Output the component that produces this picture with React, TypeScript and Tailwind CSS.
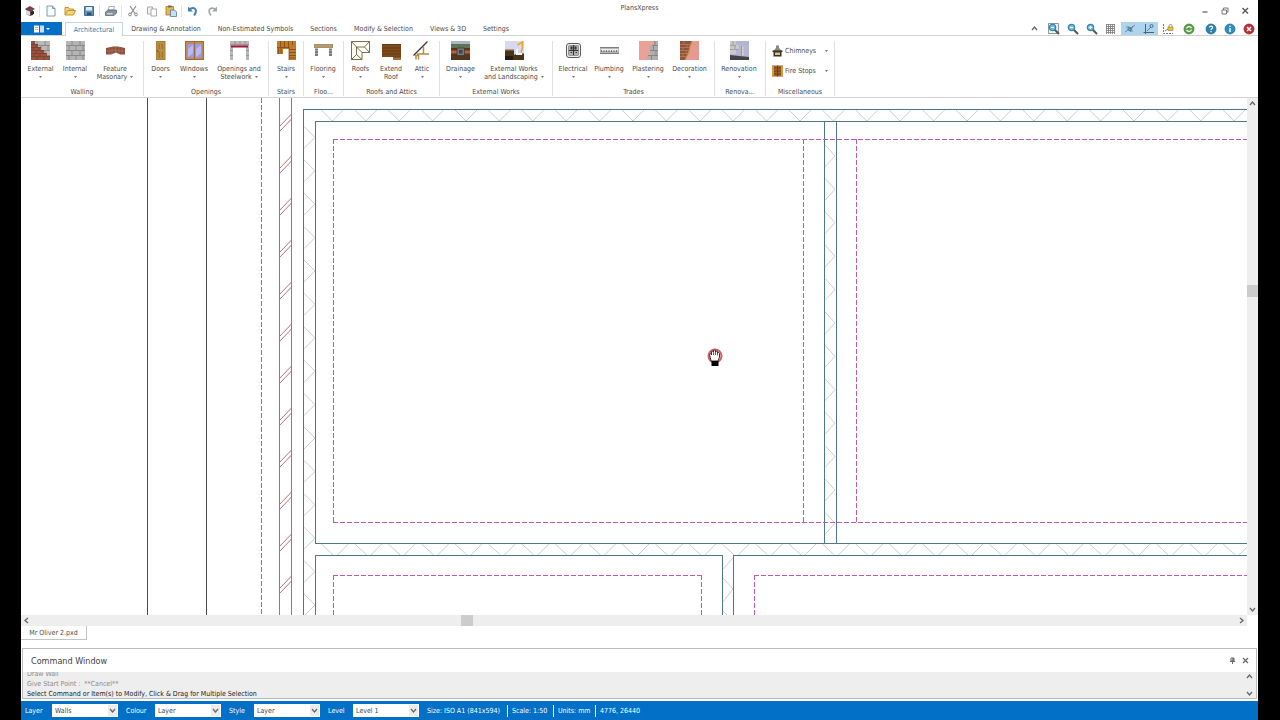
import type { ReactNode } from "react";

type Tool = { label: string[]; width: string; icon: ReactNode; menu?: boolean };
type Group = { name: string; width: string; tools: Tool[] };

function Glyph({ children }: { children: ReactNode }) {
  return (
    <svg viewBox="0 0 19 19" className="block size-[19px] shrink-0" aria-hidden="true">
      {children}
    </svg>
  );
}

function SmallIcon({ children }: { children: ReactNode }) {
  return (
    <svg viewBox="0 0 12 12" className="block size-3 shrink-0" fill="none" aria-hidden="true">
      {children}
    </svg>
  );
}

function Caret() {
  return (
    <svg viewBox="0 0 3 2" className="inline-block h-[2px] w-[3px] shrink-0" aria-hidden="true">
      <path d="M0 0h3L1.500 2z" fill="#777" />
    </svg>
  );
}

function Chevron({ dir }: { dir: "up" | "down" | "left" | "right" }) {
  const paths = {
    up: "M1 5L3.500 2L6 5",
    down: "M1 2L3.500 5L6 2",
    left: "M5 1L2 3.500L5 6",
    right: "M2 1L5 3.500L2 6",
  };
  return (
    <svg viewBox="0 0 7 7" className="block size-[7px] shrink-0" fill="none" stroke="#666" strokeWidth="1.3" aria-hidden="true">
      <path d={paths[dir]} />
    </svg>
  );
}

const blockLines = "M0 4.500H19M0 9.500H19M0 14.500H19M6 0V4.500M14 0V4.500M3 4.500V9.500M10 4.500V9.500M17 4.500V9.500M6 9.500V14.500M14 9.500V14.500M3 14.500V19M10 14.500V19M17 14.500V19";

const icons = {
  external: (
    <Glyph>
      <path d="M0 0H19V19H0z" fill="#b9b9b7" />
      <path d={blockLines} stroke="#8c8c8a" fill="none" />
      <path d="M0 0H4V3H7V6H10V9H13V12H16V15H19V19H0z" fill="#99533f" />
      <path d="M0 3.500H7M0 6.500H10M0 9.500H13M0 12.500H16M0 15.500H19M3 0V3M5 4V6M2 7V9M8 7V9M5 10V12M11 10V12M3 13V15M9 13V15M6 16V19M13 16V19" stroke="#7a3c2c" strokeWidth="0.8" fill="none" />
    </Glyph>
  ),
  internal: (
    <Glyph>
      <path d="M0 0H19V19H0z" fill="#b4b5b4" />
      <path d={blockLines} stroke="#888a89" fill="none" />
    </Glyph>
  ),
  masonry: (
    <Glyph>
      <path d="M0 7L7 5.500H12L19 7V13.500H14L10 11.500L5 13.500H0z" fill="#8f4f3c" />
      <path d="M0 10H5L9.500 8.500L14 10H19M3 6.500V13.500M6 6V13M9.500 5.500V11.500M13 6V13M16 6.500V13.500" stroke="#b07a66" strokeWidth="0.6" fill="none" />
    </Glyph>
  ),
  doors: (
    <Glyph>
      <path d="M5 0H14.500V19H5z" fill="#a87d35" />
      <path d="M6 1H13.500V18H6z" fill="#bd9145" />
      <path d="M7.500 2.500H9V8H7.500zM10.500 2.500H12V8H10.500zM7.500 10.500H9V17H7.500zM10.500 10.500H12V17H10.500z" fill="#a1762e" />
      <path d="M6 10H7.500" stroke="#4d3b22" />
    </Glyph>
  ),
  windows: (
    <Glyph>
      <path d="M0 0H19V19H0z" fill="#c18a50" />
      <path d="M2.500 3H8.500V16.500H2.500zM10.500 3H16.500V16.500H10.500z" fill="#9d9bef" />
      <path d="M3 8L8 4V12L3 16zM11 8L16 4V12L11 16z" fill="#b9b8f8" />
      <path d="M9.500 1V18M0.500 0.500H18.500V18.500H0.500z" stroke="#956236" fill="none" strokeWidth="0.8" />
    </Glyph>
  ),
  openings: (
    <Glyph>
      <path d="M0 0H19V19H16V6H3V19H0z" fill="#b8b8b8" />
      <path d="M0 3.500H19M5 0V3M10 0V3M15 0V3M0 9.500H3M0 14.500H3M16 9.500H19M16 14.500H19" stroke="#8d8d8d" strokeWidth="0.8" />
      <path d="M1 4.500H18V6.500H1z" fill="#a3153a" />
    </Glyph>
  ),
  stairs: (
    <Glyph>
      <path d="M0 0H19V19H12V8H6V13H0z" fill="#be7b2b" />
      <path d="M3.500 0V6M7.500 0V7M11.500 0V7M15.500 0V4M1.500 7V13M4 7V13M12 8.500H19M12 11.500H19M12 14.500H19M12 17H19" stroke="#8a4e11" strokeWidth="0.9" />
      <path d="M0 6.500H12V19" stroke="#774310" fill="none" strokeWidth="0.7" />
    </Glyph>
  ),
  flooring: (
    <Glyph>
      <path d="M0 3.500H19V6.500H0z" fill="#b89b69" stroke="#806a43" strokeWidth="0.6" />
      <path d="M1 7.500H4V15H1zM15 7.500H18V15H15z" fill="#777b80" />
      <path d="M1 9.500H4M1 12.500H4M15 9.500H18M15 12.500H18" stroke="#aaa" />
    </Glyph>
  ),
  roofs: (
    <Glyph>
      <path d="M0.500 0.500H18.500V11.500H11V18.500H0.500zM0.500 0.500L5.500 6L11 11.500M18.500 0.500L13.500 6L18.500 11.500M5.500 6H13.500M5.500 6V13.500M0.500 18.500L5.500 13.500L11 18.500" fill="#fffef7" stroke="#686037" strokeWidth="0.9" />
    </Glyph>
  ),
  extend: (
    <Glyph>
      <path d="M0 3H19V19H11V16H0z" fill="#7e4b1c" />
      <path d="M0 3.500H19M0 7H19M0 10H19M0 13H19M11 16H19" stroke="#60370f" strokeWidth="0.8" />
      <path d="M11 16.500H19V19H11z" fill="#9b733c" />
    </Glyph>
  ),
  attic: (
    <Glyph>
      <path d="M3 14.500V18.500M5.500 13.500V18.500M2 14.500H5.500M4 13H16M10.500 6V12.500" stroke="#b78b43" strokeWidth="1.500" fill="none" />
      <path d="M0.500 14.500L14.500 0.500" stroke="#3d352c" strokeWidth="1.300" fill="none" />
    </Glyph>
  ),
  drainage: (
    <Glyph>
      <path d="M0 0H19V4H0z" fill="#aab6c6" />
      <path d="M0 3H19V7H0z" fill="#5f7453" />
      <path d="M0 7H19V19H0z" fill="#54361e" />
      <path d="M0 9.500H19V12.500H0z" fill="#c45c38" />
      <path d="M6 7H13.500V14.500H6z" fill="#777" stroke="#353535" strokeWidth="0.7" />
      <path d="M8 9H11.500V12.500H8z" fill="#444" />
    </Glyph>
  ),
  landscaping: (
    <Glyph>
      <path d="M0 0H19V19H0z" fill="#d8d9f1" />
      <path d="M0 9H9V14L12 12.500H19V19H0z" fill="#49331b" />
      <path d="M0 8.500H9V10H0z" fill="#785f31" />
      <path d="M0 15H8V19H0z" fill="#241a12" />
      <path d="M12.500 4L17.500 1V7L16 11.500" fill="none" stroke="#e3ab2c" strokeWidth="1.500" />
      <path d="M11 9L13 7V12H17V14H11z" fill="#f7f7f7" />
    </Glyph>
  ),
  electrical: (
    <Glyph>
      <rect x="2.500" y="2.500" width="14" height="14" rx="2.500" fill="#eee" stroke="#5b5b5b" />
      <rect x="4.500" y="4.500" width="10" height="10" rx="1" fill="#b3b3b3" stroke="#777" strokeWidth="0.7" />
      <path d="M9.500 4V14M5 9.500H14M7 6H8V8H7zM11 6H12V8H11zM6.500 11.500H8M11.500 11.500H13" stroke="#333" strokeWidth="1.100" fill="none" />
    </Glyph>
  ),
  plumbing: (
    <Glyph>
      <path d="M0 6.500H19V12.500H0z" fill="#b5b5b5" />
      <path d="M0 6.500H19M0 12.500H19" stroke="#666" strokeWidth="0.8" />
      <path d="M1 9H18" stroke="#eee" strokeWidth="2" />
      <path d="M1 10H18" stroke="#555" strokeWidth="1.500" strokeDasharray="1 1.500" />
    </Glyph>
  ),
  plastering: (
    <Glyph>
      <path d="M0 0H19V19H0z" fill="#e9a198" />
      <path d="M14 0H19V19H8V14H11V9H10V5H14z" fill="#afb0ad" />
      <path d="M13 4.500H19M11 9.500H19M9 14.500H19M16 0V4M14.500 5V9M17 10V14M12.500 15V19" stroke="#81827f" fill="none" strokeWidth="0.9" />
    </Glyph>
  ),
  decoration: (
    <Glyph>
      <path d="M0 0H19V19H0z" fill="#e59a8f" />
      <path d="M0 0H12L10 5L9 10L5 19H0z" fill="#8e5439" />
      <path d="M0 3.500H10M0 6.500H10M0 9.500H9M0 12.500H8M0 15.500H6M4 0V3M7 4V6M3 7V9M6 10V12M3 13V15" stroke="#bd8267" strokeWidth="0.7" />
      <path d="M12 0L10 5L9 10L5 19" stroke="#b98a38" strokeWidth="1.200" fill="none" />
    </Glyph>
  ),
  renovation: (
    <Glyph>
      <path d="M0 0H19V19H0z" fill="#b4b5d4" />
      <path d="M0 0H6V4H9V8H6V13H0z" fill="#c9cac9" />
      <path d="M0 4.500H6M0 8.500H8M3 0V4M5 5V8" stroke="#8d8e93" strokeWidth="0.7" />
      <path d="M0 14L19 16V19H0z" fill="#414449" />
      <path d="M12 5V15M12 7H14M12 10H14M12 13H14" stroke="#e9e2a8" strokeWidth="1" />
      <path d="M11.500 5V16" stroke="#77777e" strokeWidth="0.6" />
    </Glyph>
  ),
};

const groups: Group[] = [
  {
    name: "Walling",
    width: "w-[123px]",
    tools: [
      { label: ["External"], width: "w-[35px]", icon: icons.external, menu: true },
      { label: ["Internal"], width: "w-[34px]", icon: icons.internal, menu: true },
      { label: ["Feature", "Masonary"], width: "w-[46px]", icon: icons.masonry, menu: true },
    ],
  },
  {
    name: "Openings",
    width: "w-[125px]",
    tools: [
      { label: ["Doors"], width: "w-[29px]", icon: icons.doors, menu: true },
      { label: ["Windows"], width: "w-[38px]", icon: icons.windows, menu: true },
      { label: ["Openings and", "Steelwork"], width: "w-[52px]", icon: icons.openings, menu: true },
    ],
  },
  { name: "Stairs", width: "w-[35px]", tools: [{ label: ["Stairs"], width: "w-[30px]", icon: icons.stairs, menu: true }] },
  { name: "Floo...", width: "w-[40px]", tools: [{ label: ["Flooring"], width: "w-[34px]", icon: icons.flooring, menu: true }] },
  {
    name: "Roofs and Attics",
    width: "w-[96px]",
    tools: [
      { label: ["Roofs"], width: "w-[29px]", icon: icons.roofs, menu: true },
      { label: ["Extend", "Roof"], width: "w-[32px]", icon: icons.extend },
      { label: ["Attic"], width: "w-[30px]", icon: icons.attic, menu: true },
    ],
  },
  {
    name: "External Works",
    width: "w-[113px]",
    tools: [
      { label: ["Drainage"], width: "w-[37px]", icon: icons.drainage, menu: true },
      { label: ["External Works", "and Landscaping"], width: "w-[70px]", icon: icons.landscaping, menu: true },
    ],
  },
  {
    name: "Trades",
    width: "w-[162px]",
    tools: [
      { label: ["Electrical"], width: "w-[36px]", icon: icons.electrical, menu: true },
      { label: ["Plumbing"], width: "w-[36px]", icon: icons.plumbing, menu: true },
      { label: ["Plastering"], width: "w-[42px]", icon: icons.plastering, menu: true },
      { label: ["Decoration"], width: "w-[41px]", icon: icons.decoration, menu: true },
    ],
  },
  { name: "Renova...", width: "w-[51px]", tools: [{ label: ["Renovation"], width: "w-[44px]", icon: icons.renovation, menu: true }] },
];

const tabs = [
  { name: "Drawing & Annotation", width: "w-[86px]" },
  { name: "Non-Estimated Symbols", width: "w-[93px]" },
  { name: "Sections", width: "w-[43px]" },
  { name: "Modify & Selection", width: "w-[77px]" },
  { name: "Views & 3D", width: "w-[52px]" },
  { name: "Settings", width: "w-[44px]" },
];

const fields = [
  { id: "layer", label: "Layer", value: "Walls", width: "w-[27px]" },
  { id: "colour", label: "Colour", value: "Layer", width: "w-[29px]" },
  { id: "style", label: "Style", value: "Layer", width: "w-[25px]" },
  { id: "level", label: "Level", value: "Level 1", width: "w-[25px]" },
];

function IconButton({ name, className = "w-[19px]", children }: { name: string; className?: string; children: ReactNode }) {
  return (
    <button type="button" aria-label={name} className={`flex h-full shrink-0 items-center justify-center ${className}`}>
      {children}
    </button>
  );
}

function Divider() {
  return <span className="mx-px h-3 w-px shrink-0 bg-[#e4e4e4]" />;
}

function TitleBar() {
  return (
    <header className="grid h-[22px] shrink-0 grid-cols-[1fr_auto_1fr]">
      <div className="flex items-center pl-px">
        <IconButton name="PlansXpress" className="w-4">
          <SmallIcon>
            <path d="M1 4L6 1L11 4L9 5V10L6 11L2 9V5z" fill="#5a4a50" />
            <path d="M2 5L6 6.500V10.500L2 9z" fill="#d7dbe2" />
            <path d="M4 4L7 2.500L9 5L6 5.500z" fill="#a83240" />
            <path d="M7 7L10 6V9L7 10z" fill="#252630" />
          </SmallIcon>
        </IconButton>
        <Divider />
        <IconButton name="New">
          <SmallIcon>
            <path d="M2 1H7.500L10 3.500V11H2z" fill="#fbfdff" stroke="#7f9ab4" />
            <path d="M7.500 1V3.500H10" stroke="#7f9ab4" />
          </SmallIcon>
        </IconButton>
        <IconButton name="Open">
          <SmallIcon>
            <path d="M1 10V2.500H4.500L5.500 4H9.500V5.500" fill="#f1d47c" stroke="#c19434" />
            <path d="M1 10L3.500 5.500H11.500L9.500 10z" fill="#f8d671" stroke="#c19434" />
          </SmallIcon>
        </IconButton>
        <IconButton name="Save">
          <SmallIcon>
            <path d="M1.500 1.500H10.500V10.500H1.500z" fill="#6d93b4" stroke="#426a8e" />
            <path d="M3 2H9V5.500H3z" fill="#d9ecf8" />
            <path d="M4 7.500H8.500V10H4z" fill="#31506b" />
          </SmallIcon>
        </IconButton>
        <Divider />
        <IconButton name="Print">
          <SmallIcon>
            <path d="M4 1.500H9.500L8.500 5H3z" fill="#f7fbff" stroke="#8596a6" strokeWidth="0.7" />
            <path d="M0.500 7L3 5H11.500V8L9 10.500H0.500z" fill="#8b9299" stroke="#555e66" strokeWidth="0.7" />
            <path d="M2 8H7.500V9.500H2z" fill="#b8d9ee" />
          </SmallIcon>
        </IconButton>
        <Divider />
        <IconButton name="Cut">
          <SmallIcon>
            <path d="M3 1L8 8.500M9 1L4 8.500" stroke="#888" strokeWidth="1.100" />
            <circle cx="3" cy="9.500" r="1.400" stroke="#888" />
            <circle cx="9" cy="9.500" r="1.400" stroke="#888" />
          </SmallIcon>
        </IconButton>
        <IconButton name="Copy">
          <SmallIcon>
            <path d="M1.500 2H6.500V9H1.500z" fill="#f3f3f3" stroke="#aaa" />
            <path d="M5 4H10.500V11H5z" fill="#fafafa" stroke="#aaa" />
          </SmallIcon>
        </IconButton>
        <IconButton name="Paste">
          <SmallIcon>
            <path d="M1 1.500H8.500V10H1z" fill="#e5ba4d" stroke="#a27a25" strokeWidth="0.8" />
            <path d="M3 0.500H6.500V2.500H3z" fill="#736a55" />
            <path d="M5.500 5H9.500L11.500 7V11.500H5.500z" fill="#c6e0f5" stroke="#55789b" strokeWidth="0.8" />
          </SmallIcon>
        </IconButton>
        <Divider />
        <IconButton name="Undo">
          <SmallIcon>
            <path d="M3 4C8 1.500 11 5 7 10.500" stroke="#477fac" strokeWidth="2" />
            <path d="M1 1.500V6.500H6z" fill="#477fac" />
          </SmallIcon>
        </IconButton>
        <IconButton name="Redo">
          <SmallIcon>
            <path d="M9 4C4 1.500 1 5 5 10.500" stroke="#a0a5aa" strokeWidth="1.600" />
            <path d="M11 1.500V6.500H6z" fill="#a0a5aa" />
          </SmallIcon>
        </IconButton>
      </div>
      <h1 className="pt-1 text-[7px] leading-[8px]">PlansXpress</h1>
      <div className="flex items-center justify-end pr-[3px]">
        <IconButton name="Minimise" className="w-5">
          <SmallIcon>
            <path d="M3.500 7H8.500" stroke="#666" strokeWidth="1.300" />
          </SmallIcon>
        </IconButton>
        <IconButton name="Restore" className="w-5">
          <SmallIcon>
            <path d="M3 5H7.500V9H3zM4.500 5V3H9V7H7.500" stroke="#777" />
          </SmallIcon>
        </IconButton>
        <IconButton name="Close" className="w-5">
          <SmallIcon>
            <path d="M3.500 3L9 8.500M9 3L3.500 8.500" stroke="#555" strokeWidth="1.400" />
          </SmallIcon>
        </IconButton>
      </div>
    </header>
  );
}

function Magnifier({ framed, plus }: { framed?: boolean; plus?: boolean }) {
  return (
    <SmallIcon>
      {framed && <path d="M0.500 0.500H10.500V10.500H0.500z" fill="#eef6fb" stroke="#7d8c97" strokeWidth="0.9" />}
      <circle cx="4.500" cy="4.500" r="3.200" fill="#7cbfe0" stroke="#3484b0" strokeWidth="1.200" />
      <path d="M7 7L11 11" stroke="#555" strokeWidth="2" />
      <path d={plus ? "M3 4.500H6M4.500 3V6" : "M3 4.500H6"} stroke="#fff" />
    </SmallIcon>
  );
}

function TabBar() {
  return (
    <div className="flex h-[14px] shrink-0 items-stretch border-b border-[#d2d2d2]">
      <button type="button" aria-label="Application menu" className="flex w-[41px] shrink-0 items-center justify-center gap-[2px] bg-[#0270c6]">
        <svg viewBox="0 0 10 8" className="block h-2 w-[10px]" aria-hidden="true">
          <path d="M0 0.500H5V7.500H0z" fill="#fff" />
          <path d="M6 0.500H10V7.500H6z" fill="#c7dff3" />
          <path d="M1 2.500H4M1 4.500H4" stroke="#7cafe0" strokeWidth="0.8" />
        </svg>
        <svg viewBox="0 0 4 2" className="block h-[2px] w-1" aria-hidden="true">
          <path d="M0 0H4L2 2z" fill="#fff" />
        </svg>
      </button>
      <nav className="flex">
        <button type="button" className="-mb-px ml-[3px] w-[58px] border border-b-0 border-[#c9d6de] bg-white text-[#2580a8]">
          Architectural
        </button>
        {tabs.map((tab) => (
          <button key={tab.name} type="button" className={`whitespace-nowrap ${tab.width}`}>
            {tab.name}
          </button>
        ))}
      </nav>
      <div className="ml-auto flex">
        <IconButton name="Collapse ribbon">
          <Chevron dir="up" />
        </IconButton>
        <IconButton name="Zoom window">
          <Magnifier framed />
        </IconButton>
        <IconButton name="Zoom out">
          <Magnifier />
        </IconButton>
        <IconButton name="Zoom in">
          <Magnifier plus />
        </IconButton>
        <IconButton name="Grid" className="w-5">
          <SmallIcon>
            <path d="M1.500 1V11M3.500 1V11M5.500 1V11M7.500 1V11M9.500 1V11M1 1.500H10M1 3.500H10M1 5.500H10M1 7.500H10M1 9.500H10" stroke="#858585" strokeWidth="0.9" />
          </SmallIcon>
        </IconButton>
        <IconButton name="Object snap" className="w-[18px] bg-[#aed4f0]">
          <SmallIcon>
            <path d="M1 9L11 2M2 4H5L7 8H9M6 9L9 3" stroke="#587c96" strokeWidth="0.8" />
            <circle cx="5.500" cy="6" r="1.600" stroke="#456579" strokeWidth="0.9" />
          </SmallIcon>
        </IconButton>
        <IconButton name="Ortho" className="w-[19px] bg-[#aed4f0]">
          <SmallIcon>
            <path d="M2.500 1V11M0.500 9.500H11" stroke="#456579" />
            <path d="M4 8L8 4" stroke="#456579" strokeWidth="0.8" />
            <circle cx="8.500" cy="3" r="1.500" stroke="#456579" strokeWidth="0.9" />
          </SmallIcon>
        </IconButton>
        <IconButton name="Lock axis">
          <SmallIcon>
            <path d="M1.500 1V10.500H11" stroke="#777" strokeDasharray="2 1" />
            <path d="M6 4H11V7.500H6z" fill="#e3bf42" stroke="#9e8429" strokeWidth="0.6" />
            <path d="M7 4V2.500C7 1 10 1 10 2.500V4" stroke="#8e8363" strokeWidth="0.9" />
            <path d="M3 8L6 6" stroke="#555" strokeWidth="0.8" />
          </SmallIcon>
        </IconButton>
        <IconButton name="Refresh" className="w-6">
          <SmallIcon>
            <circle cx="6" cy="6" r="5" fill="#59a347" stroke="#43783a" strokeWidth="0.7" />
            <path d="M3.500 5.500C4 3 7.500 3 8.500 5M8.500 6.500C8 9 4.500 9 3.500 7" stroke="#fff" strokeWidth="1.200" />
          </SmallIcon>
        </IconButton>
        <IconButton name="Help">
          <SmallIcon>
            <circle cx="6" cy="6" r="5" fill="#2c82ae" stroke="#1f6288" strokeWidth="0.7" />
            <path d="M4.500 4.500C4.500 2.500 8 2.800 7.500 4.800C7.200 5.800 6 5.800 6 7M6 8V9.200" stroke="#fff" strokeWidth="1.200" />
          </SmallIcon>
        </IconButton>
        <IconButton name="Information">
          <SmallIcon>
            <circle cx="6" cy="6" r="5" fill="#2f8fc0" stroke="#1f6288" strokeWidth="0.7" />
            <path d="M6 5V9M6 2.800V4" stroke="#fff" strokeWidth="1.400" />
          </SmallIcon>
        </IconButton>
        <IconButton name="Exit">
          <SmallIcon>
            <circle cx="6" cy="6" r="5" fill="#c22a33" stroke="#8d1c24" strokeWidth="0.7" />
            <path d="M4 4L8 8M8 4L4 8" stroke="#fff" strokeWidth="1.600" />
          </SmallIcon>
        </IconButton>
      </div>
    </div>
  );
}

function ToolButton({ tool }: { tool: Tool }) {
  const twoLines = tool.label.length > 1;
  return (
    <button type="button" className={`flex shrink-0 flex-col items-center whitespace-nowrap ${tool.width}`}>
      {tool.icon}
      <span className="pt-[5px]">{tool.label[0]}</span>
      <span className="flex h-2 items-center gap-[3px]">
        {twoLines && <span>{tool.label[1]}</span>}
        {tool.menu && <Caret />}
      </span>
    </button>
  );
}

function Ribbon() {
  return (
    <div className="flex h-[62px] shrink-0 border-b border-[#d2d2d2] pt-[5px] pb-px">
      {groups.map((group) => (
        <section key={group.name} className={`flex shrink-0 flex-col justify-between border-r border-[#e2e2e2] ${group.width}`}>
          <div className="flex pl-[2px]">
            {group.tools.map((tool) => (
              <ToolButton key={tool.label[0]} tool={tool} />
            ))}
          </div>
          <h2 className="text-center">{group.name}</h2>
        </section>
      ))}
      <section className="flex w-[69px] shrink-0 flex-col justify-between border-r border-[#e2e2e2]">
        <div className="flex flex-col gap-2 px-[6px] pt-1">
          <button type="button" className="flex h-3 items-center justify-between">
            <span className="flex items-center gap-[2px]">
              <svg viewBox="0 0 11 12" className="block h-3 w-[11px]" aria-hidden="true">
                <path d="M4 0.500H7V3L10 6H1L4 3z" fill="#888" />
                <path d="M0.500 5.500H10.500V7H9.500V11.500H1.500V7H0.500z" fill="#3b3029" />
                <path d="M3 7.500H8V10H3z" fill="#e7bd72" />
              </svg>
              Chimneys
            </span>
            <Caret />
          </button>
          <button type="button" className="flex h-3 items-center justify-between">
            <span className="flex items-center gap-[2px]">
              <svg viewBox="0 0 11 12" className="block h-3 w-[11px]" aria-hidden="true">
                <path d="M0 0.500H11V11.500H0z" fill="#a2622d" />
                <path d="M0 0.500H2V11.500H0zM9 0.500H11V11.500H9z" fill="#d19b39" />
                <path d="M2 3H9M2 6H9M2 9H9M5.500 0.500V11.500" stroke="#6d3718" strokeWidth="0.9" />
              </svg>
              Fire Stops
            </span>
            <Caret />
          </button>
        </div>
        <h2 className="text-center">Miscellaneous</h2>
      </section>
    </div>
  );
}

// Insulation zigzags repeat every 33.4 units along each wall.
const PITCH = 33.4;

const steps = (from: number, count: number, pitch: number) => Array.from({ length: count }, (_, i) => from + i * pitch);

function FloorPlan() {
  return (
    <svg className="block h-full w-full cursor-grab" role="img" aria-label="Floor plan">
      <g transform="translate(-21 -98)" fill="none">
        <g stroke="#bcc1c6" strokeWidth="0.8">
          {steps(332.4, 29, PITCH).map((x) => (
            <path key={x} d={`M${x - 11} 110L${x} 121L${x + 11} 110`} />
          ))}
          {steps(335.4, 29, PITCH).map((x) => (
            <path key={x} d={`M${x - 14} 544L${x - 2} 555M${x + 2} 555L${x + 13} 544`} />
          ))}
          {steps(137.4, 15, PITCH).map((y) => (
            <path key={y} d={`M304 ${y - 11}L315 ${y}L304 ${y + 11}`} />
          ))}
          {steps(155.9, 12, PITCH).map((y) => (
            <path key={y} d={`M825 ${y - 11}L835 ${y}L825 ${y + 11}`} />
          ))}
          <path d="M733 558L723 569M723 578L733 589L723 602M723 611L727 615" />
        </g>
        <g stroke="#b05f6c" strokeWidth="0.9">
          {steps(126, 12, 42).map((y) => (
            <path key={y} d={`M280 ${y}L291.500 ${y - 12}M280 ${y + 5}L291.500 ${y - 7}`} />
          ))}
        </g>
        <g shapeRendering="crispEdges">
          <path d="M147.500 98V2000M206.500 98V2000" stroke="#4c4c4c" />
          <path d="M279.500 98V2000M291.500 98V2000" stroke="#6f8790" />
          <path d="M303.500 2000V109.500H4000M315.500 543.500V121.500H4000M824.500 121V543M836.500 121V543" stroke="#527784" />
          <path d="M315 543.500H4000M315.500 2000V555.500H722.500V2000M733.500 2000V555.500H4000" stroke="#527784" />
          <g stroke="#b55db2" strokeDasharray="5 2">
            <path d="M261.500 98V2000" />
            <path d="M333.500 139V522" />
            <path d="M333 139.500H4000" />
            <path d="M333 522.500H4000" />
            <path d="M803.500 139V522" />
            <path d="M856.500 139V522" />
            <path d="M333 575.500H701" />
            <path d="M333.500 575V2000" />
            <path d="M701.500 575V2000" />
            <path d="M754.500 575V2000" />
            <path d="M754 575.500H4000" />
          </g>
        </g>
        {/* pan cursor */}
        <circle cx="715" cy="356" r="6.500" fill="#fff" stroke="#d65a6a" strokeWidth="2" />
        <path d="M711 361L709.500 354.500L710.500 353.500L711.500 355V351.500L712.500 351L713.500 352V350.500L714.500 350L715.500 350.500V352L716.500 351L717.500 351.500V353L718.500 352.500L719.500 353.500V357L718 361z" fill="#fff" stroke="#1c1c1c" strokeWidth="0.9" />
        <path d="M713.500 352V355M715.500 352V355M717.500 353V355.500" stroke="#1c1c1c" strokeWidth="0.7" />
        <path d="M711.500 361H718.500V366H711.500z" fill="#000" />
      </g>
    </svg>
  );
}

function Workspace() {
  return (
    <main className="grid min-h-0 flex-1 grid-cols-[minmax(0,1fr)_11px] grid-rows-[minmax(0,1fr)_11px]">
      <div className="min-h-0 overflow-hidden">
        <FloorPlan />
      </div>
      <div className="flex flex-col items-center bg-[#eeeeee] pt-[2px] pb-[2px]">
        <Chevron dir="up" />
        <span className="grow-[178]" />
        <span className="h-3 w-full bg-[#cccccc]" />
        <span className="grow-[309]" />
        <Chevron dir="down" />
      </div>
      <div className="flex items-center bg-[#eeeeee] px-[2px]">
        <Chevron dir="left" />
        <span className="grow-[431]" />
        <span className="h-full w-3 bg-[#cccccc]" />
        <span className="grow-[765]" />
        <Chevron dir="right" />
      </div>
    </main>
  );
}

function CommandWindow() {
  return (
    <section className="mx-px mb-[2px] flex h-[51px] shrink-0 flex-col border border-[#b9bbbd]">
      <div className="flex h-[23px] shrink-0 items-center pr-1 pl-2">
        <h2 className="text-[9px] leading-3 text-[#444]">Command Window</h2>
        <div className="ml-auto flex h-full">
          <IconButton name="Auto hide" className="w-3">
            <svg viewBox="0 0 7 7" className="block size-[7px]" fill="none" aria-hidden="true">
              <path d="M2 1H5V4H2zM1 4.500H6M3.500 4.500V7" stroke="#666" />
              <path d="M4 1V4" stroke="#666" strokeWidth="1.400" />
            </svg>
          </IconButton>
          <IconButton name="Close command window" className="w-[14px]">
            <svg viewBox="0 0 7 7" className="block size-[7px]" fill="none" aria-hidden="true">
              <path d="M1 1L6 6M6 1L1 6" stroke="#666" strokeWidth="1.200" />
            </svg>
          </IconButton>
        </div>
      </div>
      <div className="flex min-h-0 flex-1 justify-between bg-[#eeeeee] pr-[3px] pl-1">
        <div className="flex flex-col justify-end gap-[2px] overflow-hidden text-[#8a8a8a]">
          <p>Draw Wall</p>
          <p className="whitespace-pre">Give Start Point :  **Cancel**</p>
          <p className="text-[#222]">Select Command or Item(s) to Modify, Click &amp; Drag for Multiple Selection</p>
        </div>
        <div className="flex flex-col justify-between py-px">
          <Chevron dir="up" />
          <Chevron dir="down" />
        </div>
      </div>
    </section>
  );
}

function StatusBar() {
  return (
    <footer className="flex h-[19px] shrink-0 items-center bg-[#0270c6] pl-1 text-white">
      {fields.map((field) => (
        <div key={field.id} className="mr-2 flex items-center">
          <label htmlFor={field.id} className={field.width}>
            {field.label}
          </label>
          <div className="relative w-[66px]">
            <select id={field.id} className="block h-[13px] w-full appearance-none rounded-none bg-white pt-px pl-[3px] text-[7px] leading-[12px] text-[#444]">
              <option>{field.value}</option>
            </select>
            <span className="pointer-events-none absolute inset-y-px right-px flex w-[9px] items-center justify-center bg-[#ececec]">
              <Chevron dir="down" />
            </span>
          </div>
        </div>
      ))}
      <span className="w-20 whitespace-nowrap">Size: ISO A1 (841x594)</span>
      <span className="w-[46px] border-l border-white pl-1 leading-[12px] whitespace-nowrap">Scale: 1:50</span>
      <span className="w-[42px] border-l border-white pl-1 leading-[12px] whitespace-nowrap">Units: mm</span>
      <span className="border-l border-white pl-1 leading-[12px] whitespace-nowrap">4776, 26440</span>
    </footer>
  );
}

export default function App() {
  return (
    <div className="h-screen bg-black pr-[22px] pl-[21px]">
      <div className="flex h-full flex-col overflow-hidden bg-white font-['DejaVu_Sans_Condensed','DejaVu_Sans',sans-serif] text-[7px] leading-[8px] text-[#4a4a4a]">
        <TitleBar />
        <TabBar />
        <Ribbon />
        <Workspace />
        <div className="flex h-[22px] shrink-0 items-start">
          <button type="button" className="h-[14px] w-[66px] border-r border-b border-[#c4c4c4]">
            Mr Oliver 2.pxd
          </button>
        </div>
        <CommandWindow />
        <StatusBar />
      </div>
    </div>
  );
}
